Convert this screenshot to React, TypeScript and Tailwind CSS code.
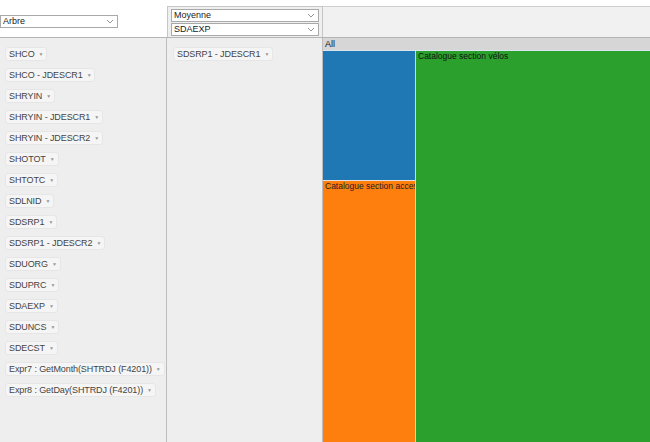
import React from "react";

const fields = [
  "SHCO",
  "SHCO - JDESCR1",
  "SHRYIN",
  "SHRYIN - JDESCR1",
  "SHRYIN - JDESCR2",
  "SHOTOT",
  "SHTOTC",
  "SDLNID",
  "SDSRP1",
  "SDSRP1 - JDESCR2",
  "SDUORG",
  "SDUPRC",
  "SDAEXP",
  "SDUNCS",
  "SDECST",
  "Expr7 : GetMonth(SHTRDJ (F4201))",
  "Expr8 : GetDay(SHTRDJ (F4201))",
];

const Chevron = () => (
  <svg width="8" height="5" viewBox="0 0 8 5" className="shrink-0">
    <polyline points="1,1 4,4 7,1" fill="none" stroke="#8a8a8a" strokeWidth="0.9" />
  </svg>
);

const Select = ({ label, className = "" }: { label: string; className?: string }) => (
  <div
    className={`flex items-center justify-between h-[13px] bg-white border border-[#a9a9a9] pl-[2px] pr-[3px] text-[9px] leading-none text-[#222] ${className}`}
  >
    <span>{label}</span>
    <Chevron />
  </div>
);

const Pill = ({ label }: { label: string }) => (
  <div className="self-start flex items-center gap-[4px] h-[14px] px-[3px] rounded-[3px] bg-[#f5f5f5] border border-[#e6e6e6] text-[9px] leading-none text-[#444] whitespace-nowrap tracking-[-0.1px]">
    <span>{label}</span>
    <span className="text-[5px] text-[#999]">▼</span>
  </div>
);

export default function App() {
  return (
    <div className="w-[650px] h-[442px] bg-white overflow-hidden font-['Liberation_Sans',Arial,sans-serif] flex flex-col">
      {/* top row */}
      <div className="flex h-[38px] border-b border-[#b5b5b5]">
        <div className="w-[167px] pt-[15px]">
          <Select label="Arbre" className="w-[118px]" />
        </div>
        <div className="w-[156px] mt-[6px] bg-[#efefef] border-l border-t border-r border-[#c6c6c6] px-[3px] pt-[2px] flex flex-col gap-[1px]">
          <Select label="Moyenne" />
          <Select label="SDAEXP" />
        </div>
        <div className="flex-1 mt-[6px] bg-[#f1f1f1] border-t border-[#d0d0d0]" />
      </div>

      {/* body */}
      <div className="flex flex-1 min-h-0">
        <div className="w-[167px] bg-[#eeeeee] border-r border-[#bdbdbd] pt-[9px] pl-[5px] flex flex-col gap-[7px]">
          {fields.map((f) => (
            <Pill key={f} label={f} />
          ))}
        </div>
        <div className="w-[156px] bg-[#eeeeee] border-r border-[#bdbdbd] pt-[9px] pl-[6px] flex flex-col">
          <Pill label="SDSRP1 - JDESCR1" />
        </div>
        <div className="flex-1 flex flex-col min-w-0 bg-[#e8e8e8]">
          <div className="h-[12px] bg-[#d6d6d6] text-[9px] leading-[12px] pl-[2px] text-[#111]">All</div>
          <div className="flex flex-1 min-h-0 border-t border-[#d9e6f0]">
            <div className="w-[93px] flex flex-col border-r border-[#cfd8cf]">
              <div className="h-[130px] bg-[#1f77b4] border-b border-[#e0e0e0]" />
              <div className="flex-1 bg-[#ff7f0e] overflow-hidden whitespace-nowrap text-[8.5px] leading-[11px] pl-[2px] text-[#222]">
                Catalogue section accessoires
              </div>
            </div>
            <div className="flex-1 bg-[#2ca02c] overflow-hidden whitespace-nowrap text-[8.5px] leading-[11px] pl-[2px] text-[#111]">
              Catalogue section vélos
            </div>
          </div>
        </div>
      </div>
    </div>
  );
}
